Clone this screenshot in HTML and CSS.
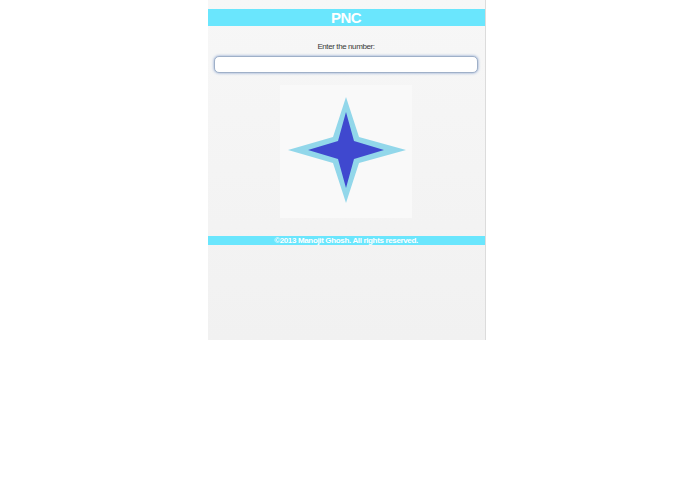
FILE: index.html
```html
<!DOCTYPE html>
<html>
<head>
<meta charset="utf-8">
<title>PNC</title>
<link rel="stylesheet" href="styles.css">
</head>
<body>
<div class="page">
  <div class="header">PNC</div>
  <div class="label">Enter the number:</div>
  <div class="field"><input class="input" type="text"></div>
  <div class="pic">
    <svg width="132" height="133" viewBox="0 0 132 133">
      <polygon points="66,12 79,52 126,65 79,78 66,118 53,78 8,65 53,52" fill="#92d7ea"/>
      <polygon points="66,27 74,56 104,65 74,74 66,103 58,74 28,65 58,56" fill="#3f48cf"/>
    </svg>
  </div>
  <div class="footer">©2013 Manojit Ghosh. All rights reserved.</div>
</div>
</body>
</html>
```
FILE: styles.css
```css
html, body {
  margin: 0;
  padding: 0;
  background: #ffffff;
}
.page {
  width: 277px;
  height: 331px;
  margin: 0 auto;
  padding-top: 9px;
  border-right: 1px solid #dcdcdc;
  background: linear-gradient(#f7f7f7, #f1f1f1);
  font-family: "Liberation Sans", Arial, sans-serif;
  position: relative;
  left: -1px;
}
.header {
  height: 17px;
  line-height: 17px;
  background: #6ae6fd;
  color: #ffffff;
  font-weight: bold;
  font-size: 15px;
  text-align: center;
  letter-spacing: -0.5px;
}
.label {
  margin-top: 16px;
  height: 10px;
  line-height: 10px;
  font-size: 8px;
  color: #3a3a3a;
  text-align: center;
  letter-spacing: -0.4px;
}
.field {
  padding: 4px 7px 0 6px;
}
.input {
  display: block;
  box-sizing: border-box;
  width: 264px;
  height: 17px;
  margin: 0;
  border: 1px solid #9fb0c8;
  border-radius: 5px;
  background: #ffffff;
  box-shadow: 0 0 3px #7f9ccc;
  outline: none;
}
.pic {
  width: 132px;
  height: 133px;
  margin: 12px auto 0;
  background: #f9f9f9;
}
.pic svg {
  display: block;
}
.footer {
  margin-top: 18px;
  height: 9px;
  line-height: 9px;
  background: #6ae6fd;
  color: #ffffff;
  font-weight: bold;
  font-size: 8px;
  text-align: center;
  letter-spacing: -0.35px;
}
```
